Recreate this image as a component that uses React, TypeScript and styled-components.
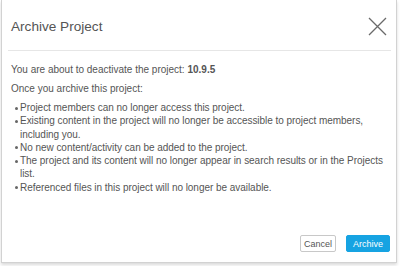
import React from "react";
import styled, { createGlobalStyle } from "styled-components";

const Global = createGlobalStyle`
  html, body { margin: 0; padding: 0; background: #ffffff; }
  body { font-family: "Liberation Sans", Arial, sans-serif; }
`;

const Page = styled.div`
  width: 400px;
  height: 266px;
  padding: 0 3px 0 1px;
  box-sizing: border-box;
  background: #fff;
`;

const Dialog = styled.div`
  height: 263px;
  box-sizing: border-box;
  background: #fff;
  border: 1px solid #d2d2d2;
  border-top: none;
  box-shadow: 0 2px 3px rgba(0, 0, 0, 0.15);
  padding: 0 5px 0 6px;
  display: flex;
  flex-direction: column;
  color: #555;
`;

const Header = styled.div`
  height: 50px;
  border-bottom: 1px solid #e6e6e6;
  display: flex;
  align-items: center;
  justify-content: space-between;
  padding: 0 4px 0 3px;
`;

const Title = styled.h1`
  margin: 0;
  margin-top: 2px;
  font-size: 13.6px;
  font-weight: 400;
  color: #555;
`;

const CloseButton = styled.button`
  border: none;
  background: none;
  padding: 0;
  width: 19px;
  height: 19px;
  margin-top: 2px;
  display: flex;
  cursor: pointer;
`;

const Body = styled.div`
  flex: 1;
  padding: 12px 0 0 3px;
  font-size: 10px;
  color: #555;
`;

const Para = styled.p<{ $gap?: number }>`
  margin: 0 0 ${(p) => p.$gap ?? 6}px 0;
  line-height: 13px;
`;

const List = styled.ul`
  margin: 0;
  padding: 0 0 0 9px;
  list-style: none;
`;

const Item = styled.li`
  position: relative;
  line-height: 13.3px;
  letter-spacing: -0.04px;
  &::before {
    content: "";
    position: absolute;
    left: -5px;
    top: 5.5px;
    width: 3px;
    height: 3px;
    border-radius: 50%;
    background: #666;
  }
`;

const Footer = styled.div`
  display: flex;
  justify-content: flex-end;
  gap: 10px;
  padding: 0 1px 10px 0;
`;

const Button = styled.button<{ $primary?: boolean }>`
  height: 17px;
  padding: 0 ${(p) => (p.$primary ? 6 : 3)}px;
  font-family: "Liberation Sans", Arial, sans-serif;
  font-size: 9px;
  border-radius: 2px;
  border: 1px solid ${(p) => (p.$primary ? "#16a3e2" : "#c8c8c8")};
  background: ${(p) => (p.$primary ? "#16a3e2" : "#fff")};
  color: ${(p) => (p.$primary ? "#fff" : "#555")};
  cursor: pointer;
`;

const items = [
  "Project members can no longer access this project.",
  "Existing content in the project will no longer be accessible to project members, including you.",
  "No new content/activity can be added to the project.",
  "The project and its content will no longer appear in search results or in the Projects list.",
  "Referenced files in this project will no longer be available.",
];

export default function App() {
  return (
    <>
      <Global />
      <Page>
        <Dialog>
          <Header>
            <Title>Archive Project</Title>
            <CloseButton aria-label="Close">
              <svg width="19" height="19" viewBox="0 0 19 19">
                <path d="M1 1 L18 18 M18 1 L1 18" stroke="#6a6a6a" strokeWidth="1.3" fill="none" />
              </svg>
            </CloseButton>
          </Header>
          <Body>
            <Para $gap={6}>
              You are about to deactivate the project: <b>10.9.5</b>
            </Para>
            <Para $gap={6}>Once you archive this project:</Para>
            <List>
              {items.map((t) => (
                <Item key={t}>{t}</Item>
              ))}
            </List>
          </Body>
          <Footer>
            <Button>Cancel</Button>
            <Button $primary>Archive</Button>
          </Footer>
        </Dialog>
      </Page>
    </>
  );
}
